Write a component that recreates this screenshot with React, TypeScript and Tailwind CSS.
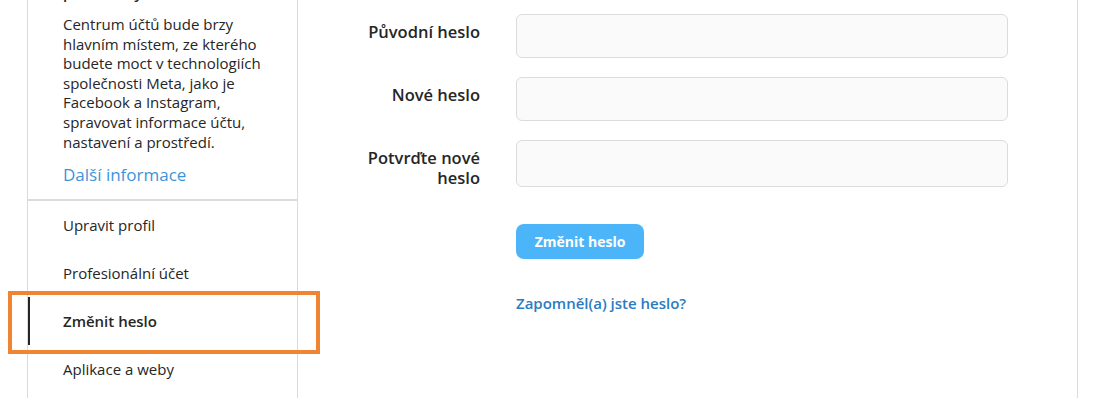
import { useState } from "react";

const menu = ["Upravit profil", "Profesionální účet", "Změnit heslo", "Aplikace a weby"];

function Field({ label, tall }: { label: React.ReactNode; tall?: boolean }) {
  return (
    <div className="flex items-start mb-[19px]">
      <label className="w-[182px] pt-[8px] text-right text-[16.5px] leading-[20px] font-semibold text-[#262626]">
        {label}
      </label>
      <input
        type="password"
        className={`ml-[36px] w-[492px] ${tall ? "h-[47px]" : "h-[44px]"} rounded-[6px] border border-[#dbdbdb] bg-[#fafafa] px-3 outline-none`}
      />
    </div>
  );
}

export default function App() {
  const [active] = useState(2);

  return (
    <div
      className="relative h-[410px] w-[1117px] overflow-hidden bg-white text-[#262626]"
      style={{ fontFamily: '"Open Sans", "Noto Sans", Arial, sans-serif' }}
    >
      <div className="ml-[27px] flex h-[398px] w-[1051px] border-x border-[#dbdbdb]">
        {/* sidebar */}
        <aside className="w-[270px] shrink-0 overflow-hidden border-r border-[#dbdbdb]">
          <div className="pl-[35px] pr-[30px]">
            <p className="-mt-[17px] text-[15px] font-semibold leading-[20px]">prostředky</p>
            <p className="mt-[12px] text-[15px] leading-[19.6px]">
              Centrum účtů bude brzy hlavním místem, ze kterého budete moct v technologiích společnosti Meta, jako je
              Facebook a Instagram, spravovat informace účtu, nastavení a prostředí.
            </p>
            <a className="mt-[13px] block text-[17px] leading-[20px] text-[#3d95d8]">Další informace</a>
          </div>
          <div className="mt-[14px] h-[2px] bg-[#dbdbdb]" />
          <nav>
            {menu.map((item, i) => (
              <div
                key={item}
                className={`flex h-[48px] items-center pl-[33px] text-[15px] ${
                  i === active ? "border-l-2 border-[#262626] font-semibold" : "border-l-2 border-transparent"
                }`}
              >
                {item}
              </div>
            ))}
          </nav>
        </aside>

        {/* main */}
        <main className="flex-1 pt-[14px]">
          <Field label="Původní heslo" />
          <Field label="Nové heslo" />
          <Field
            tall
            label={
              <>
                Potvrďte nové
                <br />
                heslo
              </>
            }
          />
          <div className="ml-[218px] mt-[36px]">
            <button className="h-[35px] w-[128px] rounded-[8px] bg-[#4cb5f9] text-[14px] font-bold text-white">
              Změnit heslo
            </button>
            <a className="mt-[33px] block text-[15px] font-semibold text-[#2b7bc4]">Zapomněl(a) jste heslo?</a>
          </div>
        </main>
      </div>

      {/* highlight annotation */}
      <div className="pointer-events-none absolute left-[8px] top-[291px] h-[63px] w-[312px] border-4 border-[#ef8532]" />
    </div>
  );
}
